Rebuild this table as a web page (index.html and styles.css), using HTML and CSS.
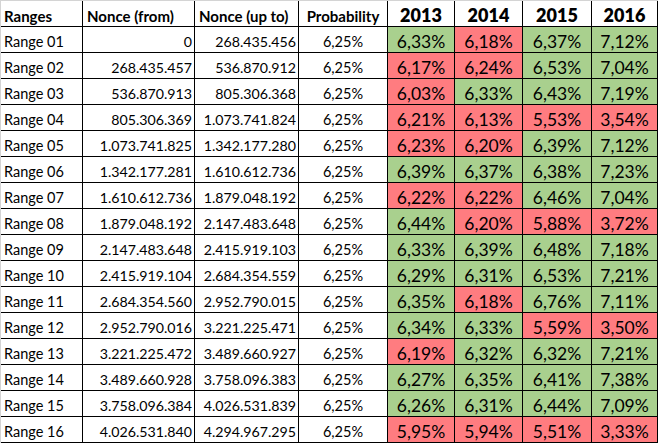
FILE: index.html
```html
<!DOCTYPE html>
<html>
<head>
<meta charset="utf-8">
<link rel="stylesheet" href="styles.css">
</head>
<body>
<div class="sheet">
  <div class="c h">Ranges</div><div class="c h hn">Nonce (from)</div><div class="c h hn">Nonce (up to)</div><div class="c h ctr">Probability</div><div class="c h yr">2013</div><div class="c h yr">2014</div><div class="c h yr">2015</div><div class="c h yr">2016</div>

  <div class="c">Range 01</div><div class="c num">0</div><div class="c num">268.435.456</div><div class="c ctr">6,25%</div><div class="c p g">6,33%</div><div class="c p r">6,18%</div><div class="c p g">6,37%</div><div class="c p g">7,12%</div>
  <div class="c">Range 02</div><div class="c num">268.435.457</div><div class="c num">536.870.912</div><div class="c ctr">6,25%</div><div class="c p r">6,17%</div><div class="c p r">6,24%</div><div class="c p g">6,53%</div><div class="c p g">7,04%</div>
  <div class="c">Range 03</div><div class="c num">536.870.913</div><div class="c num">805.306.368</div><div class="c ctr">6,25%</div><div class="c p r">6,03%</div><div class="c p g">6,33%</div><div class="c p g">6,43%</div><div class="c p g">7,19%</div>
  <div class="c">Range 04</div><div class="c num">805.306.369</div><div class="c num">1.073.741.824</div><div class="c ctr">6,25%</div><div class="c p r">6,21%</div><div class="c p r">6,13%</div><div class="c p r">5,53%</div><div class="c p r">3,54%</div>
  <div class="c">Range 05</div><div class="c num">1.073.741.825</div><div class="c num">1.342.177.280</div><div class="c ctr">6,25%</div><div class="c p r">6,23%</div><div class="c p r">6,20%</div><div class="c p g">6,39%</div><div class="c p g">7,12%</div>
  <div class="c">Range 06</div><div class="c num">1.342.177.281</div><div class="c num">1.610.612.736</div><div class="c ctr">6,25%</div><div class="c p g">6,39%</div><div class="c p g">6,37%</div><div class="c p g">6,38%</div><div class="c p g">7,23%</div>
  <div class="c">Range 07</div><div class="c num">1.610.612.736</div><div class="c num">1.879.048.192</div><div class="c ctr">6,25%</div><div class="c p r">6,22%</div><div class="c p r">6,22%</div><div class="c p g">6,46%</div><div class="c p g">7,04%</div>
  <div class="c">Range 08</div><div class="c num">1.879.048.192</div><div class="c num">2.147.483.648</div><div class="c ctr">6,25%</div><div class="c p g">6,44%</div><div class="c p r">6,20%</div><div class="c p r">5,88%</div><div class="c p r">3,72%</div>
  <div class="c">Range 09</div><div class="c num">2.147.483.648</div><div class="c num">2.415.919.103</div><div class="c ctr">6,25%</div><div class="c p g">6,33%</div><div class="c p g">6,39%</div><div class="c p g">6,48%</div><div class="c p g">7,18%</div>
  <div class="c">Range 10</div><div class="c num">2.415.919.104</div><div class="c num">2.684.354.559</div><div class="c ctr">6,25%</div><div class="c p g">6,29%</div><div class="c p g">6,31%</div><div class="c p g">6,53%</div><div class="c p g">7,21%</div>
  <div class="c">Range 11</div><div class="c num">2.684.354.560</div><div class="c num">2.952.790.015</div><div class="c ctr">6,25%</div><div class="c p g">6,35%</div><div class="c p r">6,18%</div><div class="c p g">6,76%</div><div class="c p g">7,11%</div>
  <div class="c">Range 12</div><div class="c num">2.952.790.016</div><div class="c num">3.221.225.471</div><div class="c ctr">6,25%</div><div class="c p g">6,34%</div><div class="c p g">6,33%</div><div class="c p r">5,59%</div><div class="c p r">3,50%</div>
  <div class="c">Range 13</div><div class="c num">3.221.225.472</div><div class="c num">3.489.660.927</div><div class="c ctr">6,25%</div><div class="c p r">6,19%</div><div class="c p g">6,32%</div><div class="c p g">6,32%</div><div class="c p g">7,21%</div>
  <div class="c">Range 14</div><div class="c num">3.489.660.928</div><div class="c num">3.758.096.383</div><div class="c ctr">6,25%</div><div class="c p g">6,27%</div><div class="c p g">6,35%</div><div class="c p g">6,41%</div><div class="c p g">7,38%</div>
  <div class="c">Range 15</div><div class="c num">3.758.096.384</div><div class="c num">4.026.531.839</div><div class="c ctr">6,25%</div><div class="c p g">6,26%</div><div class="c p g">6,31%</div><div class="c p g">6,44%</div><div class="c p g">7,09%</div>
  <div class="c">Range 16</div><div class="c num">4.026.531.840</div><div class="c num">4.294.967.295</div><div class="c ctr">6,25%</div><div class="c p r">5,95%</div><div class="c p r">5,94%</div><div class="c p r">5,51%</div><div class="c p r">3,33%</div>
</div>
</body>
</html>
```
FILE: styles.css
```css
html, body {
  margin: 0;
  padding: 0;
  background: #fff;
}
body {
  font-family: Lato, "Open Sans", sans-serif;
  color: #000;
}
.sheet {
  display: grid;
  grid-template-columns: 82px 112px 104px 89px 67px 68px 69px 66px;
  grid-auto-rows: 26px;
  border-top: 1px solid #d4d4d4;
  border-left: 1px solid #d4d4d4;
  width: max-content;
}
.c {
  box-sizing: border-box;
  border-right: 1px solid #000;
  border-bottom: 1px solid #000;
  display: flex;
  align-items: flex-end;
  padding: 0 3px 2px 3px;
  font-size: 14.5px;
  line-height: 16px;
  white-space: nowrap;
  overflow: hidden;
}
.h {
  font-weight: 700;
  font-size: 15px;
}
.hn {
  padding-left: 4px;
}
.num {
  justify-content: flex-end;
  padding-right: 2px;
  font-size: 14.2px;
}
.ctr {
  justify-content: center;
}
.yr {
  justify-content: center;
  font-size: 18px;
  line-height: 19px;
  font-weight: 800;
  padding-bottom: 1px;
}
.p {
  justify-content: center;
  font-size: 17.5px;
  line-height: 19px;
  padding-bottom: 1px;
}
.g {
  background: #a9d08e;
}
.r {
  background: #ff7c80;
}
```
